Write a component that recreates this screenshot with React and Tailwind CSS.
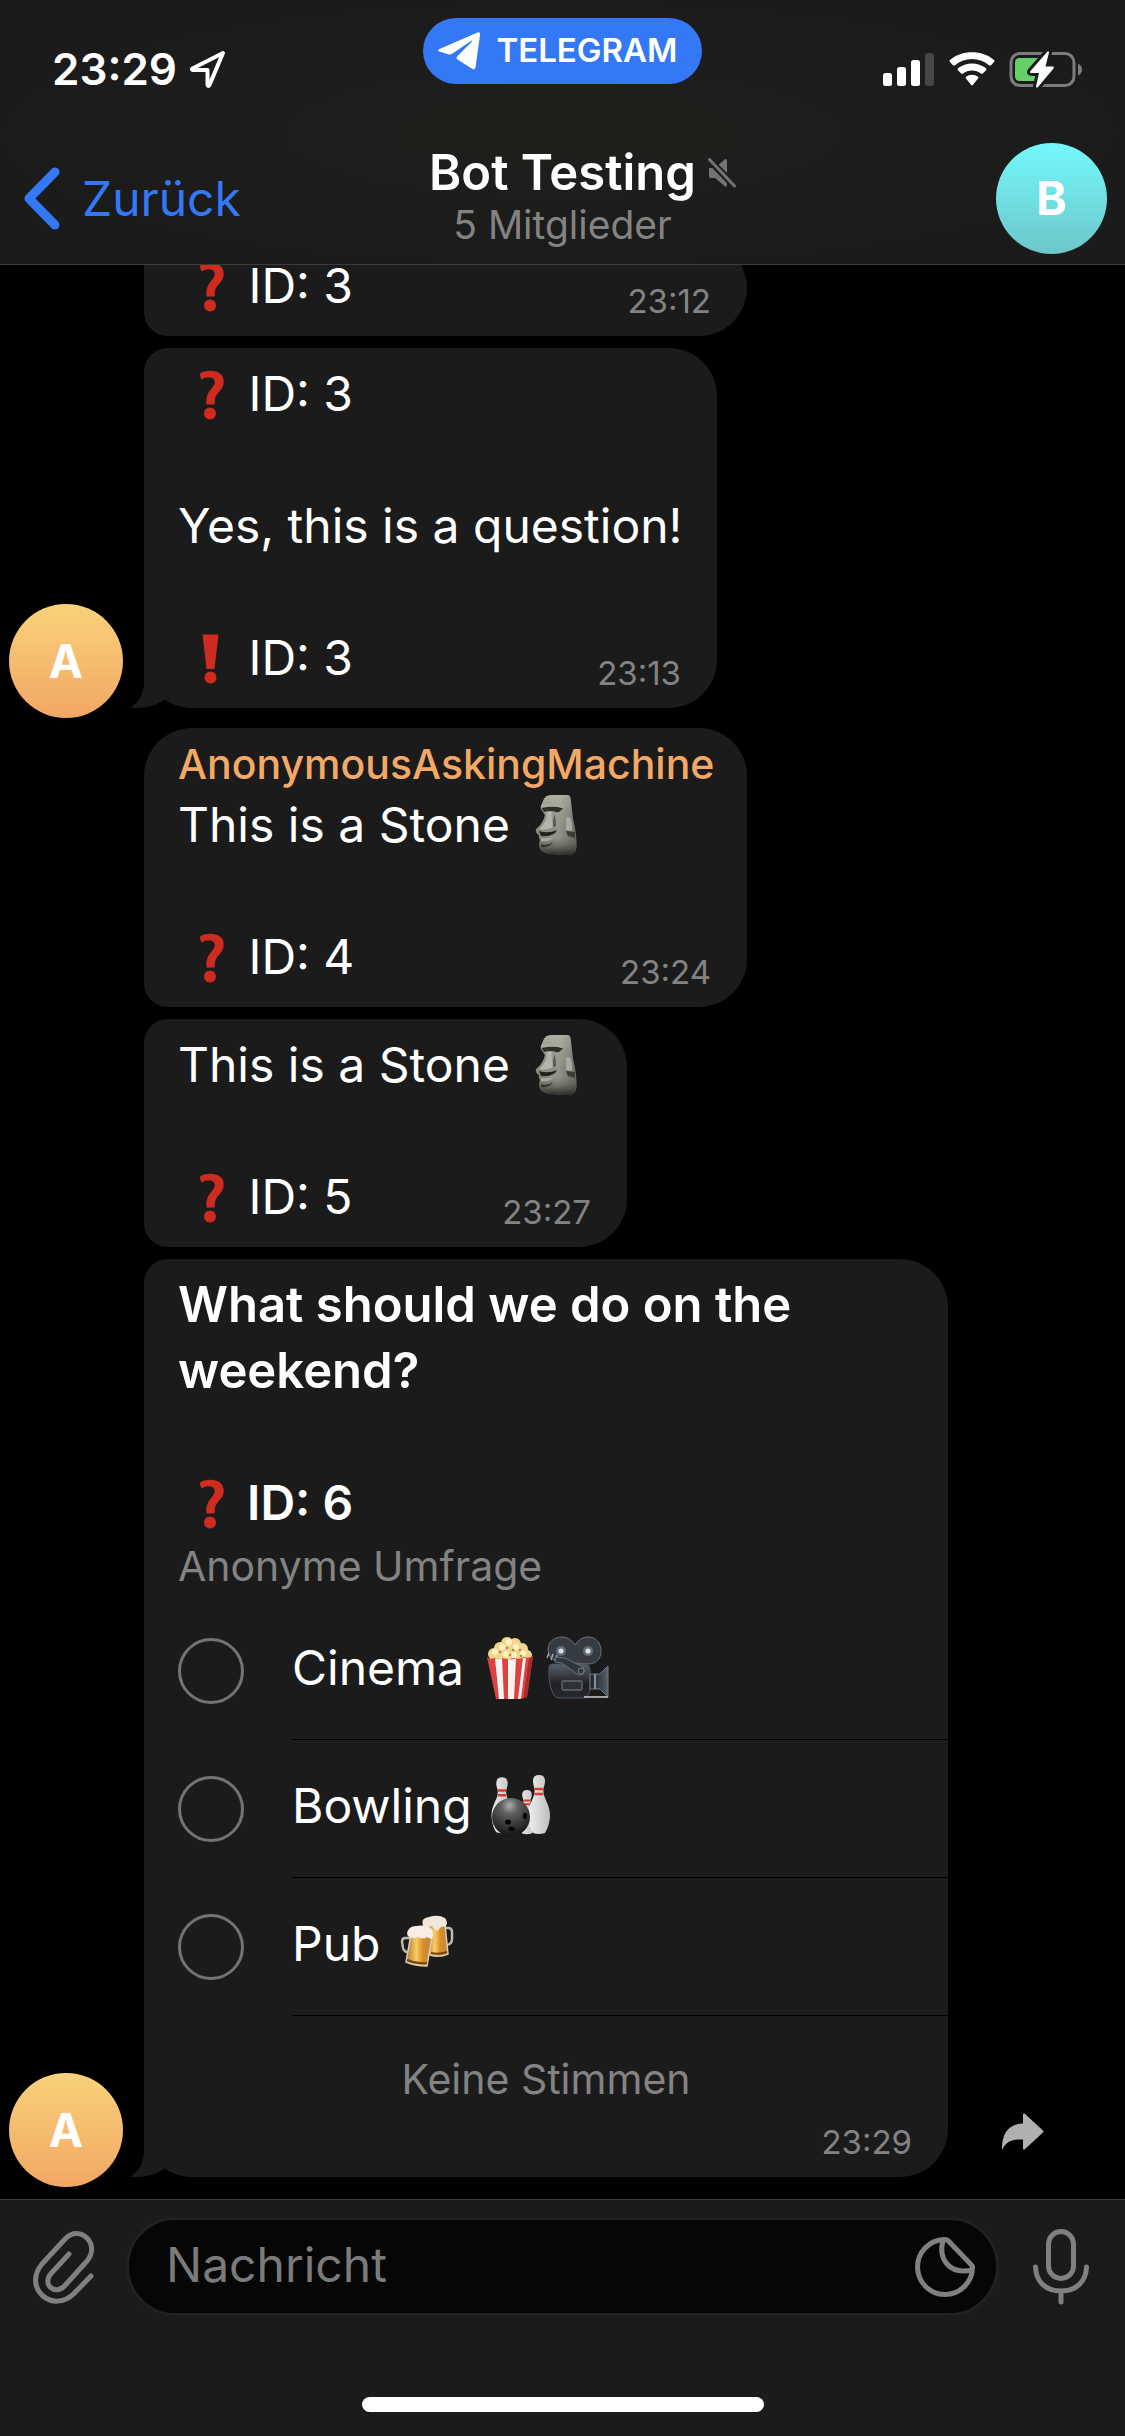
import React from "react";

function LocationIcon() {
  return (
    <svg width="38" height="40" viewBox="0 0 38 40" fill="none" stroke="#fff" strokeWidth="4" strokeLinejoin="round" aria-hidden="true">
      <path d="M34 4 L3.500 19.500 Q2 20.500 4 21 H18.500 V35.500 Q19 38 20.500 36 Z" />
    </svg>
  );
}

function PlaneIcon() {
  return (
    <svg width="42" height="38" viewBox="0 0 42 38" fill="#fff" aria-hidden="true">
      <path d="M39.500 0.400 Q42.500 -0.500 42 3 L37.500 35.500 Q37 38 34.500 37 L19.500 27.500 Q17.500 26 19.500 24 L34 9.500 Q35 8 33 9 L14.500 21.500 Q12.500 23 10 22.300 L1.500 19.500 Q-1 18 1.500 17 Z" />
    </svg>
  );
}

function StatusIcons() {
  return (
    <div className="flex items-center gap-[14px]">
      <svg width="52" height="34" viewBox="0 0 52 34" role="img" aria-label="Signal">
        <rect x="0" y="21" width="9" height="13" rx="2.500" fill="#fff" />
        <rect x="14" y="15" width="9" height="19" rx="2.500" fill="#fff" />
        <rect x="28" y="8" width="9" height="26" rx="2.500" fill="#fff" />
        <rect x="42" y="1" width="9" height="33" rx="2.500" fill="#464646" />
      </svg>
      <svg width="46" height="34" viewBox="0 0 46 34" fill="#fff" role="img" aria-label="WLAN">
        <path d="M1 10 Q0 9 1 8 C13 -2.300 33 -2.300 45 8 Q46 9 45 10 L42 13.200 Q41 14 40 13.200 C30 4.800 16 4.800 6 13.200 Q5 14 4 13.200 Z" />
        <path d="M9 18.300 Q8 17.300 9 16.300 C17 9.800 29 9.800 37 16.300 Q38 17.300 37 18.300 L33.800 21.500 Q33 22.200 32 21.500 C27 17.500 19 17.500 14 21.500 Q13 22.200 12.200 21.500 Z" />
        <path d="M17 26.500 Q16 25.500 17 24.700 C20.500 22 25.500 22 29 24.700 Q30 25.500 29 26.500 L24 32.800 Q23 34 22 32.800 Z" />
      </svg>
      <svg width="74" height="38" viewBox="0 0 74 38" role="img" aria-label="Akku lädt">
        <rect x="2" y="3.500" width="63" height="32" rx="9" fill="none" stroke="#7d7d7d" strokeWidth="3" />
        <path d="M69 13.500 Q73 15.500 73 19.500 Q73 23.500 69 25.500 Z" fill="#7d7d7d" />
        <rect x="6" y="8" width="28" height="23" rx="4.500" fill="#65cf68" />
        <path d="M38.500 1.500 L21.500 21 Q20 23 22.500 23 H30 L27 36.500 Q27.500 38.500 29 37 L44.500 18.500 Q45.500 16.500 43.500 16.500 H36.500 L40 2.500 Q39.500 0.500 38.500 1.500 Z" fill="#fff" stroke="#1b1b1b" strokeWidth="6" paintOrder="stroke" strokeLinejoin="round" />
      </svg>
    </div>
  );
}

function MuteIcon() {
  return (
    <svg width="28" height="30" viewBox="0 0 28 30" role="img" aria-label="Stumm" className="-mr-10">
      <path d="M1 10 H7 L16.500 1.500 Q19 0 19 3 V26.500 Q19 29.500 16.500 28 L7 20 H2.500 Q1 20 1 18 Z" fill="#747474" />
      <path d="M1 1.500 L26.500 28" stroke="#1d1d1b" strokeWidth="7" />
      <path d="M1.500 1.500 L26.500 28" stroke="#747474" strokeWidth="3" strokeLinecap="round" />
    </svg>
  );
}

function QuestionMark() {
  return (
    <svg width="57" height="52" viewBox="-1 3 57 52" role="img" aria-label="Fragezeichen" className="inline-block h-[52px] w-[57px] overflow-visible align-middle">
      <path d="M21 4.500 C25 1.500 32 1 37 2.500 C43 4.500 45.500 9 44.500 15 C43.500 21 38 23.500 36.300 28.500 C35.500 31 36 33 35.500 35.500 H27.500 C27 29 28 25.500 31 21.500 C34 17.500 36.500 15 35.500 11.500 C34.500 7.500 27 7 23 10.500 C21.500 9 21 7 21 4.500 Z" fill="#cf2c20" />
      <circle cx="31" cy="44.500" r="6" fill="#cf2c20" />
    </svg>
  );
}

function ExclamationMark() {
  return (
    <svg width="57" height="52" viewBox="-1 3 57 52" role="img" aria-label="Ausrufezeichen" className="inline-block h-[52px] w-[57px] overflow-visible align-middle">
      <path d="M23.500 1.500 H39.500 L35.500 36 H27.500 Z" fill="#cf2c20" />
      <circle cx="31.500" cy="44.500" r="6" fill="#cf2c20" />
    </svg>
  );
}

const MOAI_OUTLINE =
  "M17 8 Q19 2 25 2 H41 Q44 2 44.500 5 L47 26 Q51 42 50.500 54 Q50 62 42 62 L24 61 Q14 60 13 52 L14 47 Q12 44 13 42 Q9 40 10 36 Q17 31 19 22 L15 16 Q14 14 17 8 Z";

function Moai() {
  return (
    <svg width="64" height="64" viewBox="0 0 64 64" role="img" aria-label="Moai" className="inline-block h-16 w-16 align-middle">
      <defs>
        <linearGradient id="stone" x1="0" x2="1">
          <stop offset="0" stopColor="#85877b" />
          <stop offset="0.550" stopColor="#96988e" />
          <stop offset="1" stopColor="#65665e" />
        </linearGradient>
        <linearGradient id="stoneShade" x1="0" x2="0" y1="0" y2="1">
          <stop offset="0" stopColor="#cfcfc0" stopOpacity="0.500" />
          <stop offset="0.700" stopColor="#77786f" stopOpacity="0.150" />
          <stop offset="1" stopColor="#1f201b" stopOpacity="0.950" />
        </linearGradient>
      </defs>
      <path d={MOAI_OUTLINE} fill="url(#stone)" />
      <path d={MOAI_OUTLINE} fill="url(#stoneShade)" />
      <path d="M15 14 Q27 12 37 15 Q34 20 30 19 Q24 17 18 19 Z" fill="#2f302a" />
      <path d="M15 12 Q26 9 38 13 L37 15 Q27 12 15 15 Z" fill="#a9aa9e" />
      <path d="M21 19 Q22 28 13 36 Q20 38 27 34 Q25 25 26 19 Z" fill="#b4b5aa" />
      <path d="M27 34 Q27 26 29 21 L30 33 Z" fill="#54554d" />
      <path d="M13 38 Q22 41 31 37 Q28 44 15 43 Z" fill="#23241e" />
      <path d="M15 45 Q22 46 28 44 Q24 49 15 48 Z" fill="#aaab9d" />
      <path d="M15 51 Q22 53 27 49 Q24 55 15 54 Z" fill="#35362f" />
      <path d="M40 25 Q45 21 46 32 L46 38 L40 37 Z" fill="#a8a9a0" />
      <path d="M40 38 L49 39 L49 45 L42 43 Z" fill="#3b3c35" />
    </svg>
  );
}

function Popcorn() {
  return (
    <svg width="62" height="64" viewBox="0 0 62 64" role="img" aria-label="Popcorn" className="h-16 w-[62px]">
      <g fill="#f0d68f">
        <circle cx="14" cy="18" r="6" /><circle cx="20" cy="12" r="6" /><circle cx="27" cy="7" r="6" /><circle cx="35" cy="8" r="6" /><circle cx="42" cy="13" r="6" /><circle cx="47" cy="19" r="5" /><circle cx="30" cy="16" r="10" /><circle cx="22" cy="20" r="6" /><circle cx="38" cy="20" r="7" />
      </g>
      <g fill="#fff3c4">
        <circle cx="15" cy="16" r="3" /><circle cx="22" cy="11" r="3" /><circle cx="29" cy="6" r="3" /><circle cx="36" cy="11" r="3" /><circle cx="43" cy="17" r="3" /><circle cx="26" cy="18" r="3" /><circle cx="34" cy="19" r="3" />
      </g>
      <g fill="#b9853c">
        <circle cx="20" cy="16" r="1.300" /><circle cx="27" cy="12" r="1.300" /><circle cx="33" cy="14" r="1.300" /><circle cx="40" cy="14" r="1.300" /><circle cx="30" cy="19" r="1.300" /><circle cx="41" cy="20" r="1.300" />
      </g>
      <path d="M7 21 Q10 24 14 22 Q18 24 22 22 Q28 24 34 22 Q40 24 44 21 Q49 23 53 20 L47 61 L41 63 H16 Z" fill="#dc4240" />
      <path d="M15 22.500 Q18 24 22 22 L24 63 L19 63 Z M28 23 Q32 24 36 22.500 L34 63 H28 Z M43 22 L46 22 L41 62.500 L38 63 Z" fill="#fbf3f0" />
      <path d="M49 22.500 L53 20 L47 61 L43.500 62.500 Z" fill="#a62b2a" />
    </svg>
  );
}

function Camera() {
  return (
    <svg width="64" height="64" viewBox="0 0 64 64" role="img" aria-label="Filmkamera" className="size-16">
      <defs>
        <linearGradient id="camBody" x1="0" x2="0" y1="0" y2="1">
          <stop offset="0" stopColor="#55606b" />
          <stop offset="0.600" stopColor="#231f22" />
          <stop offset="1" stopColor="#25292f" />
        </linearGradient>
        <linearGradient id="lens" x1="0" x2="1">
          <stop offset="0" stopColor="#20242a" />
          <stop offset="0.600" stopColor="#3c434b" />
          <stop offset="1" stopColor="#59616a" />
        </linearGradient>
      </defs>
      <path d="M2 14 C2 5 9 1 16 1 Q24 1 29 9 Q34 1 42 1 C50 1 55 7 55 15 C55 23 50 28 42 28 L14 26 Q2 24 2 14 Z" fill="#363b41" stroke="#6b7178" strokeWidth="1" />
      <circle cx="15" cy="15" r="5" fill="#656c74" /><circle cx="15" cy="15" r="2.500" fill="#dbe2e8" />
      <circle cx="42" cy="15" r="5" fill="#656c74" /><circle cx="42" cy="15" r="2.500" fill="#dbe2e8" />
      <path d="M3 31 Q3 28 7 28 H40 Q44 29 44 34 V52 Q44 62 36 62 H14 Q8 62 6 55 Q2 46 3 31 Z" fill="url(#camBody)" stroke="#4c555f" strokeWidth="1" />
      <path d="M3 17 L1 22 M7 18 L5 24 M11 19 L9 25" stroke="#a0a8b0" strokeWidth="1.500" />
      <path d="M10 21 L19 22 L37 31 Q40 35 37 38 Q34 40 31 38 L16 27 L9 26 Z" fill="#31363d" stroke="#68707a" strokeWidth="1" />
      <path d="M44 38 H54 L62 30 V61 L54 53 H44 Z" fill="url(#lens)" stroke="#717b85" strokeWidth="1" />
      <path d="M49 38 V53" stroke="#858f99" strokeWidth="2" />
      <rect x="16" y="45" width="20" height="9" rx="1.500" fill="#2e3136" stroke="#656a70" strokeWidth="1.300" />
      <circle cx="35" cy="35" r="3" fill="#30353b" stroke="#77808a" strokeWidth="1" />
      <path d="M38 61 L62 61" stroke="#cdd2d7" strokeWidth="1.500" />
    </svg>
  );
}

function Bowling() {
  const pin = "M0 -24 Q6 -24 6 -18 C6 -13 4 -12 4.500 -7 C5 0 11 6 11 16 C11 24 8 31 6 34 Q0 36 -6 34 C-8 31 -11 24 -11 16 C-11 6 -5 0 -4.500 -7 C-4 -12 -6 -13 -6 -18 Q-6 -24 0 -24 Z";
  return (
    <svg width="64" height="64" viewBox="0 0 64 64" role="img" aria-label="Bowling" className="size-16">
      <defs>
        <radialGradient id="ball" cx="0.460" cy="0.200" r="0.750">
          <stop offset="0" stopColor="#aaaaaa" />
          <stop offset="0.300" stopColor="#606060" />
          <stop offset="1" stopColor="#1a1a1a" />
        </radialGradient>
        <linearGradient id="pinFill" x1="0" x2="1">
          <stop offset="0" stopColor="#f0f0f0" />
          <stop offset="1" stopColor="#bdbdbd" />
        </linearGradient>
      </defs>
      {[
        "translate(14 26) scale(0.950)",
        "translate(39 34) scale(0.800 0.750)",
        "translate(51 25)",
      ].map((t) => (
        <g key={t} transform={t}>
          <path d={pin} fill="url(#pinFill)" />
          <path d="M-4.500 -10 H4.500 M-4.500 -5 H4.500" stroke="#dc3a30" strokeWidth="2.600" />
        </g>
      ))}
      <circle cx="23" cy="43" r="19" fill="url(#ball)" />
      <g fill="#050505">
        <ellipse cx="20" cy="48" rx="3" ry="2.600" />
        <ellipse cx="23.500" cy="55" rx="3.200" ry="2.200" />
        <ellipse cx="37" cy="42" rx="2" ry="3.300" />
      </g>
    </svg>
  );
}

function Beers() {
  return (
    <svg width="64" height="64" viewBox="0 0 64 64" role="img" aria-label="Bierkrüge" className="size-16">
      <defs>
        <linearGradient id="beer" x1="0" x2="1">
          <stop offset="0" stopColor="#b5742a" />
          <stop offset="0.400" stopColor="#f8cd68" />
          <stop offset="0.650" stopColor="#d98d24" />
          <stop offset="1" stopColor="#bf8540" />
        </linearGradient>
      </defs>
      <path d="M49 16 H52 Q56 16 56 20 V27 Q56 32 51 33 H50" fill="none" stroke="#bcb8b0" strokeWidth="2.500" />
      <path d="M30 12 H49 L52 42 Q43 46 34 43 Z" fill="url(#beer)" stroke="#d9cdb6" strokeWidth="1.500" />
      <path d="M27 14 Q24 6 33 5 Q42 2 49 6 Q53 11 49 15 Q45 13 42 19 Q38 18 36 14 L29 16 Z" fill="#f1e6dd" />
      <path d="M14 26 H9 Q6 26 6 30 L7 36 Q8 40 12 40" fill="none" stroke="#bcb8b0" strokeWidth="2.500" />
      <path d="M15 22 L36 25 L31 54 Q19 54 10 50 Z" fill="url(#beer)" stroke="#d9cdb6" strokeWidth="1.500" />
      <path d="M11 22 Q12 14 20 14 Q30 12 36 17 Q39 23 35 27 L31 25 Q27 28 22 25 Q13 28 11 22 Z" fill="#f8ece4" />
      <path d="M11 48 Q20 52 31 51 M35 41 Q43 43 51 40" stroke="#7c430f" strokeWidth="2" fill="none" />
    </svg>
  );
}

function Avatar() {
  return (
    <div className="-mb-[10px] flex size-[114px] shrink-0 items-center justify-center rounded-full bg-linear-to-b from-[#f8d27a] to-[#f2a764] text-[46px] font-bold text-white">
      A
    </div>
  );
}

function Tail() {
  return (
    <svg width="60" height="58" viewBox="0 0 60 58" className="absolute bottom-0 -left-[14px]" aria-hidden="true">
      <path d="M14 0 V32 C14 44 9 52 0 58 C14 58.500 27 56 35 49 L60 10 Z" fill="#1b1b1b" />
    </svg>
  );
}

function Message({ avatar, corners, children, action }) {
  return (
    <div className="flex items-end pl-[9px]">
      {avatar ? <Avatar /> : <div className="w-[114px] shrink-0" />}
      <div className={`relative ml-[21px] bg-[#1b1b1b] ${corners}`}>
        {avatar && <Tail />}
        {children}
      </div>
      {action}
    </div>
  );
}

function Time({ children }) {
  return <time className="absolute right-9 bottom-[14px] text-[33px] leading-[42px] text-[#838383]">{children}</time>;
}

function PollOption({ id, label, children }) {
  return (
    <label htmlFor={id} className="flex h-[138px] cursor-pointer items-center pl-[34px]">
      <input id={id} type="radio" name="umfrage" className="size-[66px] shrink-0 appearance-none rounded-full border-[3px] border-[#737373]" />
      <span className="ml-12 flex h-full flex-1 items-center border-b border-black pb-1.5">
        {label}
        <span className="ml-4 flex gap-1">{children}</span>
      </span>
    </label>
  );
}

export default function App() {
  return (
    <div className="flex min-h-screen flex-col bg-black font-[Inter,sans-serif] text-white">
      <header className="relative z-10 h-[265px] border-b border-[#3c3c3c] bg-[#1b1b1b] bg-[radial-gradient(ellipse_at_center,#1f1f1c,#1b1b1b_70%)]">
        <div className="grid grid-cols-[1fr_auto_1fr] items-start px-[42px]">
          <div className="mt-[41px] ml-[10px] flex h-14 items-center gap-3 text-[44px] font-semibold">
            <span>23:29</span>
            <LocationIcon />
          </div>
          <button className="mt-[18px] flex h-[66px] items-center gap-4 rounded-full bg-[#3578f6] pr-6 pl-[15px] text-[33px] font-semibold">
            <PlaneIcon />
            TELEGRAM
          </button>
          <div className="mt-[41px] flex h-14 items-center justify-end">
            <StatusIcons />
          </div>
        </div>
        <div className="mt-[46px] grid grid-cols-[1fr_auto_1fr] items-center px-[18px]">
          <button className="ml-[6px] flex items-center gap-[22px] text-[48px] leading-[60px] text-[#3578f6]">
            <svg width="36" height="63" viewBox="0 0 36 63" fill="none" stroke="#3578f6" strokeWidth="9" strokeLinecap="round" strokeLinejoin="round" aria-hidden="true">
              <path d="M31 5 L5 31.500 L31 58" />
            </svg>
            Zurück
          </button>
          <div className="text-center">
            <h1 className="flex items-center gap-3 text-[49px] leading-[56px] font-semibold">
              Bot Testing
              <MuteIcon />
            </h1>
            <p className="pb-1 text-[39px] leading-[48px] text-[#838383]">5 Mitglieder</p>
          </div>
          <button className="flex size-[111px] items-center justify-center justify-self-end rounded-full bg-linear-to-b from-[#73f8fd] to-[#6dc6c9] text-[46px] font-bold">B</button>
        </div>
      </header>

      <main className="-mt-[25px] flex flex-1 flex-col gap-3 pb-5 text-[48px] leading-[66px]">
        <Message corners="rounded-r-[48px] rounded-l-[24px]">
          <div className="w-[603px] pt-[13px] pb-[17px] pl-[34px]">
            <p><QuestionMark /> ID: 3</p>
            <Time>23:12</Time>
          </div>
        </Message>

        <Message avatar corners="rounded-[48px] rounded-tl-[24px]">
          <div className="w-[573px] pt-[13px] pb-[17px] pl-[34px]">
            <p><QuestionMark /> ID: 3</p>
            <p className="py-[66px]">Yes, this is a question!</p>
            <p><ExclamationMark /> ID: 3</p>
            <Time>23:13</Time>
          </div>
        </Message>

        <div className="mt-2">
          <Message corners="rounded-[48px] rounded-bl-[24px]">
            <div className="w-[603px] pt-[13px] pb-[17px] pl-[34px]">
              <p className="mb-[5px] text-[41px] leading-[46px] font-medium text-[#f3a866]">AnonymousAskingMachine</p>
              <p className="mb-[66px] flex h-[66px] items-center">This is a Stone <span className="ml-4 flex"><Moai /></span></p>
              <p><QuestionMark /> ID: 4</p>
              <Time>23:24</Time>
            </div>
          </Message>
        </div>

        <Message corners="rounded-r-[48px] rounded-l-[24px]">
          <div className="w-[483px] pt-[13px] pb-[17px] pl-[34px]">
            <p className="mb-[66px] flex h-[66px] items-center">This is a Stone <span className="ml-4 flex"><Moai /></span></p>
            <p><QuestionMark /> ID: 5</p>
            <Time>23:27</Time>
          </div>
        </Message>

        <Message
          avatar
          corners="rounded-[48px] rounded-tl-[24px]"
          action={
            <button aria-label="Teilen" className="mb-[27px] ml-[54px]">
              <svg width="42" height="37" viewBox="0 0 42 37" fill="#b0b0b0" aria-hidden="true">
                <path d="M21 1.500 Q21 0 22.500 0.500 L41 17.500 Q42 18.500 41 19.500 L22.500 36.500 Q21 37 21 35.500 V26.500 C11 26 4 28 0.500 36.500 Q0 37 0 35.500 C0 20 7 11 21 10.500 Z" />
              </svg>
            </button>
          }
        >
          <div className="w-[804px] pt-[13px]">
            <h2 className="px-[34px] text-[49px] font-semibold">
              What should we do on the weekend?
              <span className="mt-[66px] block text-[48px]"><QuestionMark /> ID: 6</span>
            </h2>
            <p className="pb-[6px] pl-[34px] text-[41px] leading-[60px] text-[#838383]">Anonyme Umfrage</p>
            <PollOption id="cinema" label="Cinema"><Popcorn /><Camera /></PollOption>
            <PollOption id="bowling" label="Bowling"><Bowling /></PollOption>
            <PollOption id="pub" label="Pub"><Beers /></PollOption>
            <p className="pt-[33px] pb-[68px] text-center text-[41px] leading-[60px] text-[#838383]">Keine Stimmen</p>
            <Time>23:29</Time>
          </div>
        </Message>
      </main>

      <footer className="border-t border-[#3c3c3c] bg-[#1b1b1b] pt-[17px] pb-6">
        <div className="flex items-center pr-9 pl-[33px]">
          <button aria-label="Anhang" className="shrink-0">
            <svg width="63" height="76" viewBox="0 0 63 76" fill="none" stroke="#808080" strokeWidth="5" strokeLinecap="round" aria-hidden="true">
              <path d="M36 25 L18.500 44 C8 55 22 67 31.500 57 L54 32 C68 15 47 -5 32.500 9.500 L9 35 C-11 59 20 86 41.500 64 L58 47" />
            </svg>
          </button>
          <div className="ml-[30px] flex h-[99px] min-w-0 flex-1 items-center rounded-full border-[3px] border-[#212121] bg-[#060606] pr-[21px] pl-[37px]">
            <input aria-label="Nachricht" placeholder="Nachricht" className="w-full min-w-0 flex-1 bg-transparent pb-1 text-[48px] leading-[66px] outline-none placeholder:text-[#7b7b7b]" />
            <button aria-label="Sticker" className="shrink-0">
              <svg width="60" height="60" viewBox="0 0 60 60" fill="none" stroke="#808080" strokeWidth="5" strokeLinejoin="round" aria-hidden="true">
                <path d="M29 2.500 A27.500 27.500 0 1 0 57.500 31 Q58 29 56 27.500 L33 3.500 Q31.500 2.500 29 2.500 Z" />
                <path d="M28 3 C23 22 34 38 57 33" />
              </svg>
            </button>
          </div>
          <button aria-label="Sprachnachricht" className="ml-[34px] shrink-0">
            <svg width="56" height="76" viewBox="0 0 56 76" fill="none" stroke="#808080" strokeWidth="5" strokeLinecap="round" aria-hidden="true">
              <rect x="15.500" y="2.500" width="25" height="47" rx="12.500" />
              <path d="M2.500 38 C3 53 13 62 28 62 C43 62 53 53 53.500 38 M28 63 V73" />
            </svg>
          </button>
        </div>
        <div className="mx-auto mt-[81px] h-[15px] w-[402px] rounded-full bg-white" />
      </footer>
    </div>
  );
}
